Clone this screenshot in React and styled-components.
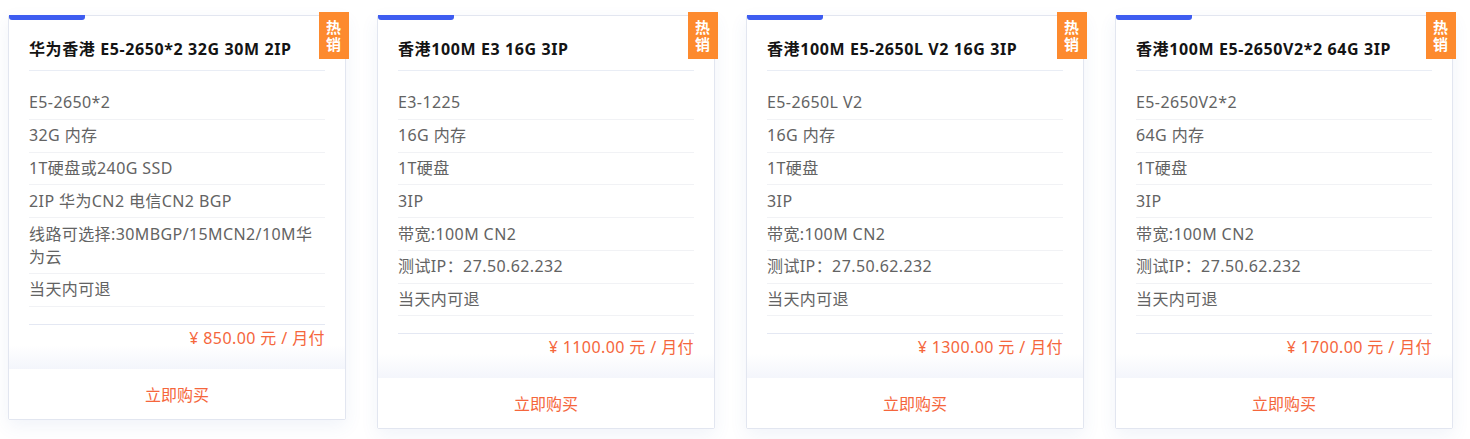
import React from "react";
import styled, { createGlobalStyle } from "styled-components";

const Global = createGlobalStyle`
  html, body { margin: 0; padding: 0; background: #ffffff; }
  body {
    font-family: "Noto Sans", "Noto Sans CJK SC", sans-serif;
    -webkit-font-smoothing: antialiased;
  }
  * { box-sizing: border-box; }
`;

const Page = styled.div`
  width: 1470px;
  height: 439px;
  overflow: hidden;
  padding: 15px 8px 0 8px;
`;

const Grid = styled.div`
  display: grid;
  grid-template-columns: repeat(4, 338px);
  column-gap: 31px;
  align-items: start;
`;

const Card = styled.div`
  position: relative;
  background: #fff;
  border: 1px solid #e2e6f0;
  border-radius: 2px;
  box-shadow: 0 6px 18px rgba(70, 100, 180, 0.08);
  display: flex;
  flex-direction: column;
`;

const TopBar = styled.span`
  position: absolute;
  top: -1px;
  left: 0;
  width: 76px;
  height: 5px;
  background: #3d5cf0;
  border-radius: 0 0 3px 3px;
  box-shadow: 0 14px 12px -4px rgba(60, 70, 110, 0.035);
`;

const Badge = styled.div`
  position: absolute;
  top: -4px;
  right: -4px;
  width: 30px;
  height: 47px;
  background: #fd8a2e;
  display: flex;
  align-items: center;
  justify-content: center;
  padding-right: 1px;
`;

const BadgeText = styled.span`
  writing-mode: vertical-rl;
  color: #fff;
  font-family: "Noto Sans CJK SC", sans-serif;
  font-weight: 700;
  font-size: 15px;
  line-height: 15px;
  letter-spacing: 2px;
  margin-top: 2px;
`;

const Body = styled.div`
  padding: 0 20px;
`;

const Title = styled.h3`
  margin: 0;
  padding: 22px 0 10px;
  font-size: 16px;
  line-height: 22px;
  letter-spacing: 0.6px;
  font-weight: 700;
  color: #141414;
  border-bottom: 1px solid #e9edf5;
  white-space: nowrap;
`;

const List = styled.ul`
  list-style: none;
  margin: 16px 0 0;
  padding: 0;
`;

const Item = styled.li`
  padding: 4.4px 0;
  font-size: 16px;
  line-height: 23px;
  letter-spacing: 0.4px;
  color: #636363;
  border-bottom: 1px solid #f1f2f5;
  word-break: break-all;
`;

const Price = styled.div`
  margin-top: 17px;
  border-top: 1px solid #e4e8f3;
  padding: 2px 0 20px;
  text-align: right;
  font-size: 16px;
  line-height: 22px;
  letter-spacing: 0.4px;
  color: #f5663c;
`;

const Footer = styled.div`
  position: relative;
  background: #fff;
  padding: 15px 0 13px;
  text-align: center;
  font-size: 16px;
  line-height: 22px;
  color: #f5663c;
  cursor: pointer;

  &::before {
    content: "";
    position: absolute;
    left: 0;
    right: 0;
    bottom: 100%;
    height: 24px;
    background: linear-gradient(to top, rgba(232, 236, 248, 0.5), rgba(255, 255, 255, 0));
    pointer-events: none;
  }
`;

const cards = [
  {
    title: "华为香港 E5-2650*2 32G 30M 2IP",
    items: [
      "E5-2650*2",
      "32G 内存",
      "1T硬盘或240G SSD",
      "2IP 华为CN2 电信CN2 BGP",
      "线路可选择:30MBGP/15MCN2/10M华为云",
      "当天内可退",
    ],
    price: "850.00",
  },
  {
    title: "香港100M E3 16G 3IP",
    items: ["E3-1225", "16G 内存", "1T硬盘", "3IP", "带宽:100M CN2", "测试IP：27.50.62.232", "当天内可退"],
    price: "1100.00",
  },
  {
    title: "香港100M E5-2650L V2 16G 3IP",
    items: ["E5-2650L V2", "16G 内存", "1T硬盘", "3IP", "带宽:100M CN2", "测试IP：27.50.62.232", "当天内可退"],
    price: "1300.00",
  },
  {
    title: "香港100M E5-2650V2*2 64G 3IP",
    items: ["E5-2650V2*2", "64G 内存", "1T硬盘", "3IP", "带宽:100M CN2", "测试IP：27.50.62.232", "当天内可退"],
    price: "1700.00",
  },
];

export default function App() {
  return (
    <>
      <Global />
      <Page>
        <Grid>
          {cards.map((c) => (
            <Card key={c.title}>
              <TopBar />
              <Badge>
                <BadgeText>热销</BadgeText>
              </Badge>
              <Body>
                <Title>{c.title}</Title>
                <List>
                  {c.items.map((it) => (
                    <Item key={it}>{it}</Item>
                  ))}
                </List>
                <Price>¥ {c.price} 元 / 月付</Price>
              </Body>
              <Footer>立即购买</Footer>
            </Card>
          ))}
        </Grid>
      </Page>
    </>
  );
}
